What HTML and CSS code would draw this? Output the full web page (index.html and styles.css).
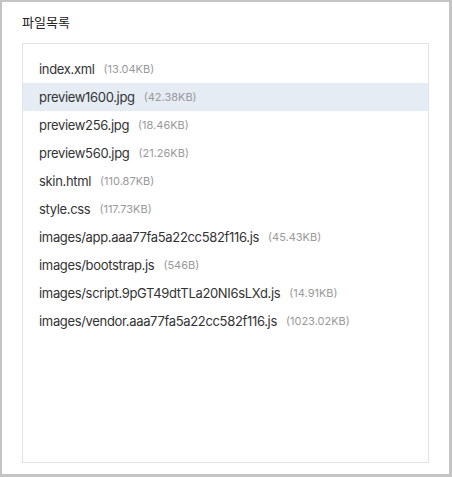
FILE: index.html
```html
<!DOCTYPE html>
<html lang="ko">
<head>
<meta charset="utf-8">
<link rel="stylesheet" href="styles.css">
</head>
<body>
<div class="panel">
  <h2 class="title">파일목록</h2>
  <div class="filebox">
    <ul class="files">
      <li class="file"><span class="name">index.xml</span><span class="size">(13.04KB)</span></li>
      <li class="file active"><span class="name">preview1600.jpg</span><span class="size">(42.38KB)</span></li>
      <li class="file"><span class="name">preview256.jpg</span><span class="size">(18.46KB)</span></li>
      <li class="file"><span class="name">preview560.jpg</span><span class="size">(21.26KB)</span></li>
      <li class="file"><span class="name">skin.html</span><span class="size">(110.87KB)</span></li>
      <li class="file"><span class="name">style.css</span><span class="size">(117.73KB)</span></li>
      <li class="file"><span class="name">images/app.aaa77fa5a22cc582f116.js</span><span class="size">(45.43KB)</span></li>
      <li class="file"><span class="name">images/bootstrap.js</span><span class="size">(546B)</span></li>
      <li class="file"><span class="name">images/script.9pGT49dtTLa20NI6sLXd.js</span><span class="size">(14.91KB)</span></li>
      <li class="file"><span class="name">images/vendor.aaa77fa5a22cc582f116.js</span><span class="size">(1023.02KB)</span></li>
    </ul>
  </div>
</div>
</body>
</html>
```
FILE: styles.css
```css
html {
  background: #c4c4c4;
  height: 100%;
}
body {
  margin: 2px 3px 3px 2px;
  background: #fff;
  height: calc(100% - 5px);
  box-sizing: border-box;
  font-family: Inter, "Noto Sans CJK KR", sans-serif;
  color: #333;
}
.panel {
  padding: 11px 20px 0 20px;
}
.title {
  margin: 0;
  font-size: 13px;
  font-weight: 400;
  line-height: 18px;
  color: #222;
  font-family: Inter, "Noto Sans CJK KR", sans-serif;
}
.filebox {
  margin-top: 12px;
  height: 420px;
  box-sizing: border-box;
  border: 1px solid #dfe4ea;
}
.files {
  list-style: none;
  margin: 0;
  padding: 11px 0 0 0;
}
.file {
  height: 28px;
  display: flex;
  align-items: center;
  padding-left: 16px;
  font-size: 13px;
  letter-spacing: -0.33px;
}
.file.active {
  background: #e6ecf4;
}
.name {
  color: #333;
}
.size {
  margin-left: 9px;
  font-size: 11px;
  letter-spacing: 0;
  color: #999;
}
```
